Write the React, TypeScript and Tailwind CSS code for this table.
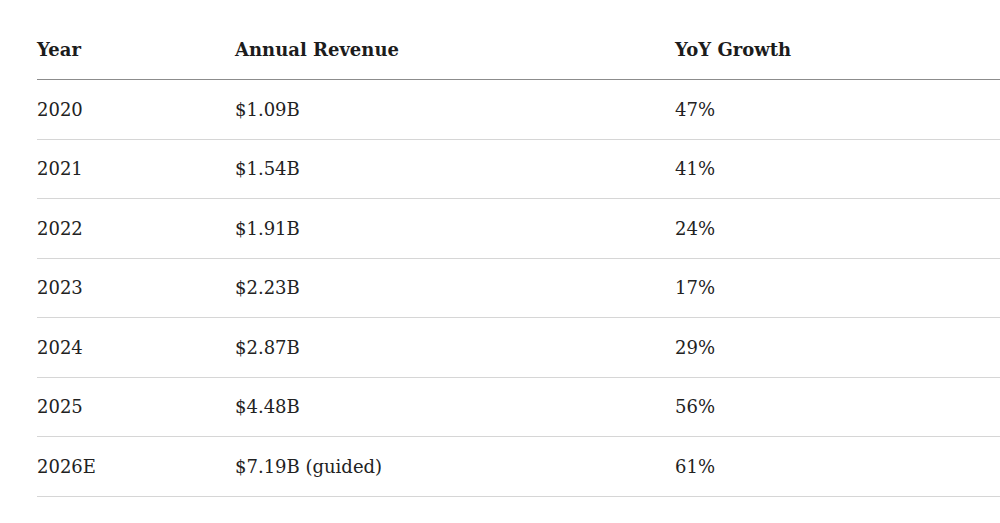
const rows = [
  ['2020', '$1.09B', '47%'],
  ['2021', '$1.54B', '41%'],
  ['2022', '$1.91B', '24%'],
  ['2023', '$2.23B', '17%'],
  ['2024', '$2.87B', '29%'],
  ['2025', '$4.48B', '56%'],
  ['2026E', '$7.19B (guided)', '61%'],
];

export default function App() {
  return (
    <div className="min-h-[523px] w-full bg-white pl-[37px] pt-[20px] text-[#1c1c1c]" style={{ fontFamily: '"DejaVu Serif", serif' }}>
      <div className="grid h-[60px] grid-cols-[198px_440px_1fr] items-center border-b border-[#8c8c8c] text-[18px] font-bold">
        <div>Year</div>
        <div>Annual Revenue</div>
        <div>YoY Growth</div>
      </div>
      {rows.map(([year, rev, yoy]) => (
        <div key={year} className="grid h-[59.5px] grid-cols-[198px_440px_1fr] items-center border-b border-[#d6d6d6] text-[18px] text-[#222]">
          <div>{year}</div>
          <div>{rev}</div>
          <div>{yoy}</div>
        </div>
      ))}
    </div>
  );
}
